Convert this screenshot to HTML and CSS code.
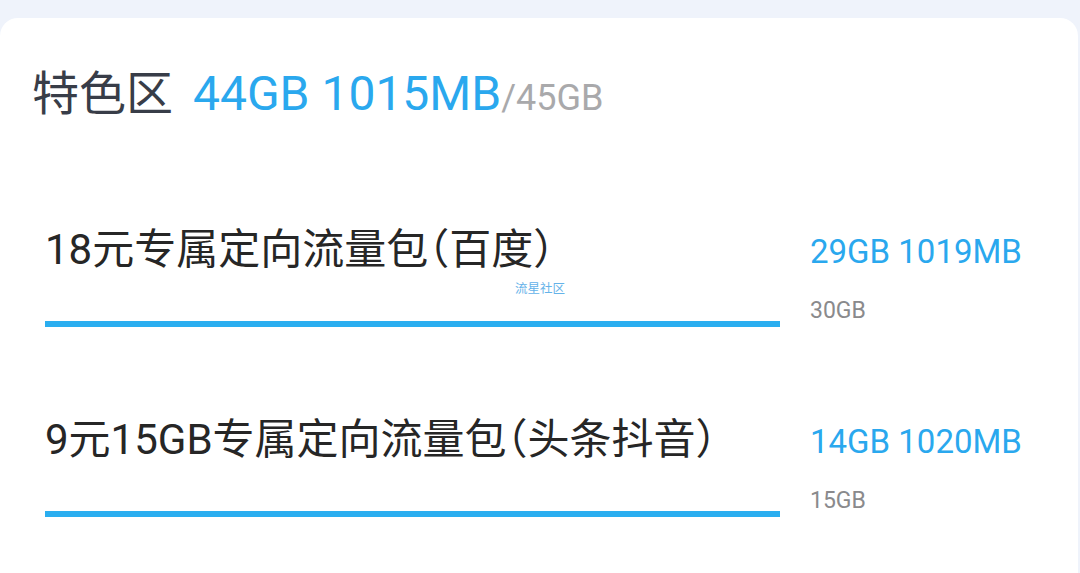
FILE: index.html
```html
<!DOCTYPE html>
<html lang="zh-CN">
<head>
    <meta charset="UTF-8">
    <meta name="viewport" content="width=device-width, initial-scale=1.0">
    <title>特色区</title>
    <link rel="stylesheet" href="styles.css">
</head>
<body>
    <div class="card">
        <div class="zone-head">
            <span class="zone-name">特色区</span>
            <span class="zone-left">44GB 1015MB</span><span class="zone-total">/45GB</span>
        </div>

        <div class="pack">
            <div class="pack-main">
                <p class="pack-name">18元专属定向流量包（百度）</p>
                <div class="bar"><div class="bar-fill" style="width: 100%;"></div></div>
            </div>
            <div class="pack-side">
                <p class="pack-left">29GB 1019MB</p>
                <p class="pack-total">30GB</p>
            </div>
        </div>

        <div class="pack">
            <div class="pack-main">
                <p class="pack-name">9元15GB专属定向流量包（头条抖音）</p>
                <div class="bar"><div class="bar-fill" style="width: 100%;"></div></div>
            </div>
            <div class="pack-side">
                <p class="pack-left">14GB 1020MB</p>
                <p class="pack-total">15GB</p>
            </div>
        </div>

        <!-- watermark -->
        <span class="mark">流星社区</span>
    </div>
</body>
</html>
```

FILE: styles.css
```css
/* Page */
body {
    margin: 0;
    background: #eff3fb;
    font-family: Roboto, "Noto Sans CJK SC", sans-serif;
    overflow: hidden;
}

p {
    margin: 0;
}

.card {
    position: relative;
    margin: 18px 2px 0 0;
    padding: 46px 0 60px 32px;
    background: #fff;
    border-radius: 18px;
    min-height: 600px;
}

/* Zone header */
.zone-head {
    line-height: 60px;
    height: 60px;
    white-space: nowrap;
}
.zone-name {
    font-size: 47px;
    color: #383d48;
    margin-right: 16px;
}
.zone-left {
    font-size: 48px;
    color: #2aa8ee;
}
.zone-total {
    font-size: 36px;
    color: #a9a9ab;
}

/* Packs */
.pack {
    display: flex;
    gap: 30px;
    margin-top: 101px;
    padding-left: 13px;
}
.pack + .pack {
    margin-top: 88px;
}
.pack-main {
    width: 735px;
}
.pack-name {
    font-size: 42px;
    line-height: 50px;
    color: #262626;
    white-space: nowrap;
    font-feature-settings: "halt";
}
.bar {
    margin-top: 46px;
    height: 6px;
    background: #e6eef5;
}
.bar-fill {
    height: 100%;
    background: #2aaef0;
}
.pack-side {
    padding-top: 7px;
}
.pack-left {
    font-size: 33px;
    line-height: 40px;
    color: #2aa8ee;
    white-space: nowrap;
}
.pack-total {
    margin-top: 24px;
    font-size: 23px;
    line-height: 30px;
    color: #8a8a8c;
}

.mark {
    position: absolute;
    left: 515px;
    top: 260px;
    font-size: 12.5px;
    color: #4aa6e6;
    opacity: 0.85;
}
```
